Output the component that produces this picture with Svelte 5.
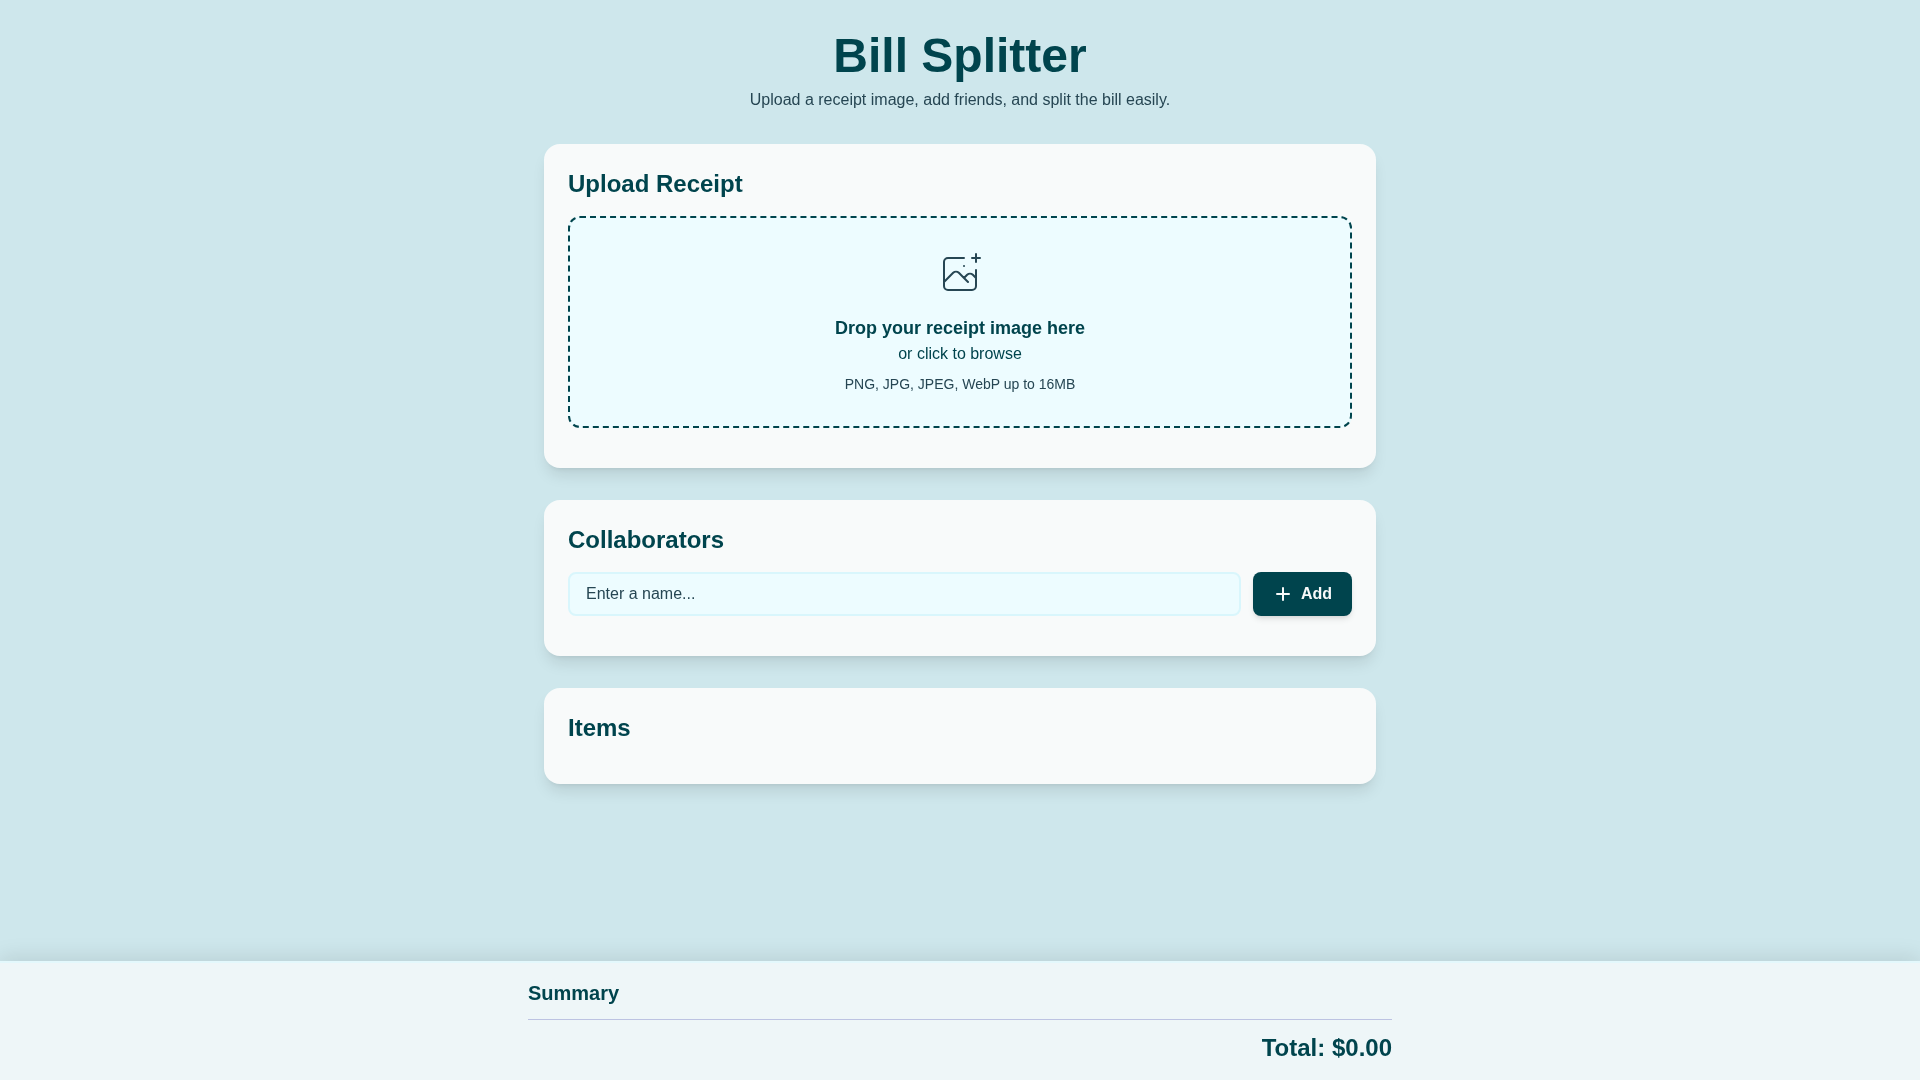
<script>
  let name = $state('');
  let items = $state([]);
  const total = $derived(items.reduce((sum, item) => sum + item.price, 0));
</script>

<div class="page">
  <main class="container">
    <header class="head">
      <h1>Bill Splitter</h1>
      <p>Upload a receipt image, add friends, and split the bill easily.</p>
    </header>

    <section class="card">
      <h2>Upload Receipt</h2>
      <div class="drop">
        <svg class="drop-icon" viewBox="0 0 48 48" fill="none" stroke="currentColor" stroke-width="2" stroke-linecap="round" stroke-linejoin="round">
          <path d="M28 8H12a4 4 0 00-4 4v20m32-12v8m0 0v8a4 4 0 01-4 4H12a4 4 0 01-4-4v-4m32-4l-3.172-3.172a4 4 0 00-5.656 0L28 28M8 32l9.172-9.172a4 4 0 015.656 0L28 28m0 0l4 4M40 4v8m-4-4h8M28 16h.02" />
        </svg>
        <p class="drop-title">Drop your receipt image here</p>
        <p class="drop-sub">or click to browse</p>
        <p class="drop-hint">PNG, JPG, JPEG, WebP up to 16MB</p>
      </div>
    </section>

    <section class="card">
      <h2>Collaborators</h2>
      <div class="add-row">
        <input bind:value={name} type="text" placeholder="Enter a name..." />
        <button type="button">
          <svg viewBox="0 0 20 20" width="20" height="20" fill="none" stroke="currentColor" stroke-width="2" stroke-linecap="round">
            <path d="M10 4v12M4 10h12" />
          </svg>
          Add
        </button>
      </div>
    </section>

    <section class="card">
      <h2>Items</h2>
    </section>
  </main>

  <footer class="summary">
    <div class="summary-inner">
      <h3>Summary</h3>
      <p class="total">Total: ${total.toFixed(2)}</p>
    </div>
  </footer>
</div>

<style>
  :global(body) {
    background: #cee7ec;
    font-family: "Liberation Sans", Arial, sans-serif;
  }

  .page {
    min-height: 100vh;
    display: flex;
    flex-direction: column;
    will-change: transform;
  }

  .container {
    width: 832px;
    margin: 0 auto;
    padding-top: 32px;
  }

  .head {
    text-align: center;
    margin-bottom: 32px;
  }

  h1 {
    margin: 0 0 8px;
    font-size: 48px;
    line-height: 48px;
    font-weight: 700;
    color: #00444d;
  }

  .head p {
    margin: 0;
    font-size: 16px;
    line-height: 24px;
    color: #264653;
  }

  .card {
    background: #f8fafa;
    border-radius: 16px;
    padding: 24px;
    margin-bottom: 32px;
    box-shadow: 0 10px 15px -3px rgba(0, 0, 0, 0.1), 0 4px 6px -4px rgba(0, 0, 0, 0.1);
  }

  h2 {
    margin: 0 0 16px;
    font-size: 24px;
    line-height: 32px;
    font-weight: 700;
    color: #00444d;
  }

  .card > :last-child:not(h2) {
    margin-bottom: 16px;
  }

  .drop {
    border: 2px dashed #00444d;
    border-radius: 12px;
    background: #edfcff;
    padding: 32px;
    text-align: center;
  }

  .drop-icon {
    display: block;
    width: 48px;
    height: 48px;
    margin: 0 auto 16px;
    overflow: visible;
    color: #264653;
  }

  .drop p {
    margin: 0;
  }

  .drop-title {
    font-size: 18px;
    line-height: 28px;
    font-weight: 700;
    color: #00444d;
  }

  .drop-sub {
    font-size: 16px;
    line-height: 24px;
    color: #00444d;
  }

  .drop .drop-hint {
    margin-top: 8px;
    font-size: 14px;
    line-height: 20px;
    color: #264653;
  }

  .add-row {
    display: flex;
    gap: 12px;
  }

  input {
    flex: 1;
    min-width: 0;
    height: 44px;
    box-sizing: border-box;
    padding: 0 16px;
    border: 2px solid #d9f6fc;
    border-radius: 8px;
    background: #edfcff;
    font-family: inherit;
    font-size: 16px;
    color: #264653;
    outline: none;
  }

  input::placeholder {
    color: #264653;
    opacity: 1;
  }

  button {
    display: flex;
    align-items: center;
    gap: 8px;
    height: 44px;
    padding: 0 20px;
    border: none;
    border-radius: 8px;
    background: #00444d;
    color: #f8fafa;
    font-family: inherit;
    font-size: 16px;
    font-weight: 700;
    cursor: pointer;
    box-shadow: 0 4px 6px -1px rgba(0, 0, 0, 0.1), 0 2px 4px -2px rgba(0, 0, 0, 0.1);
  }

  .summary {
    margin-top: auto;
    background: #eef6f8;
    border-top: 2px solid #e3f8fc;
    box-shadow: 0 -4px 20px rgba(0, 0, 0, 0.1);
  }

  .summary-inner {
    width: 864px;
    margin: 0 auto;
    padding: 16px 0;
  }

  h3 {
    margin: 0;
    padding-bottom: 12px;
    border-bottom: 1px solid #bcc3e2;
    font-size: 20px;
    line-height: 28px;
    font-weight: 700;
    color: #00444d;
  }

  .total {
    margin: 12px 0 0;
    text-align: right;
    font-size: 24px;
    line-height: 32px;
    font-weight: 700;
    color: #00444d;
  }
</style>
